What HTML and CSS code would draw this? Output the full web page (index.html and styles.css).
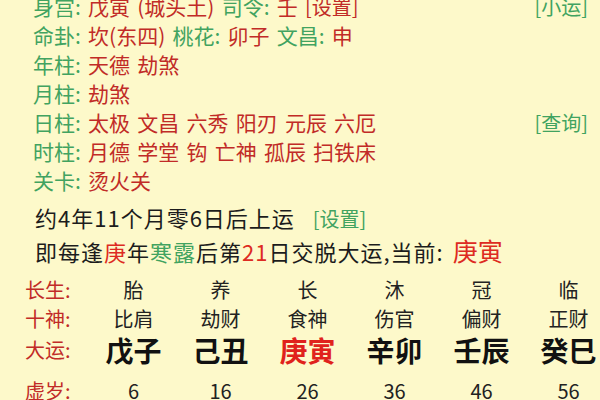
FILE: index.html
```html
<!DOCTYPE html>
<html lang="zh-CN">
<head>
<meta charset="utf-8">
<link rel="stylesheet" href="styles.css">
</head>
<body>
<div class="page">
  <div class="info">
    <div class="row">
      <div><span class="g">身宫:</span> <span class="r">戊寅 (城头土)</span> <span class="g">司令:</span> <span class="r">壬</span> <span class="r link">[设置]</span></div>
      <span class="g link">[小运]</span>
    </div>
    <div class="row">
      <div><span class="g">命卦:</span> <span class="r">坎(东四)</span> <span class="g">桃花:</span> <span class="r">卯子</span> <span class="g">文昌:</span> <span class="r">申</span></div>
    </div>
    <div class="row"><div><span class="g">年柱:</span> <span class="r">天德 劫煞</span></div></div>
    <div class="row"><div><span class="g">月柱:</span> <span class="r">劫煞</span></div></div>
    <div class="row">
      <div><span class="g">日柱:</span> <span class="r">太极 文昌 六秀 阳刃 元辰 六厄</span></div>
      <span class="g link">[查询]</span>
    </div>
    <div class="row"><div><span class="g">时柱:</span> <span class="r">月德 学堂 钩 亡神 孤辰 扫铁床</span></div></div>
    <div class="row"><div><span class="g">关卡:</span> <span class="r">烫火关</span></div></div>
  </div>
  <div class="sum">
    <div class="line">约4年11个月零6日后上运 <span class="g small">[设置]</span></div>
    <div class="line">即每逢<span class="hr">庚</span>年<span class="g">寒露</span>后第<span class="hr">21</span>日交脱大运,当前: <span class="hr big">庚寅</span></div>
  </div>
  <div class="table">
    <div class="lab">长生:</div>
    <div class="c">胎</div><div class="c">养</div><div class="c">长</div><div class="c">沐</div><div class="c">冠</div><div class="c">临</div>
    <div class="lab">十神:</div>
    <div class="c">比肩</div><div class="c">劫财</div><div class="c">食神</div><div class="c">伤官</div><div class="c">偏财</div><div class="c">正财</div>
    <div class="lab dy">大运:</div>
    <div class="c gz">戊子</div><div class="c gz">己丑</div><div class="c gz cur">庚寅</div><div class="c gz">辛卯</div><div class="c gz">壬辰</div><div class="c gz">癸巳</div>
    <div class="lab age">虚岁:</div>
    <div class="c age">6</div><div class="c age">16</div><div class="c age">26</div><div class="c age">36</div><div class="c age">46</div><div class="c age">56</div>
  </div>
</div>
</body>
</html>
```
FILE: styles.css
```css
html, body {
  margin: 0;
  padding: 0;
  background: #fdf9ca;
  overflow: hidden;
}
body {
  width: 600px;
  height: 400px;
  font-family: "Noto Sans CJK SC", "Noto Sans", sans-serif;
  color: #1c1c1c;
}
.page {
  display: flex;
  flex-direction: column;
}
.info {
  margin-top: -8px;
  padding: 0 12px 0 33px;
  font-size: 21px;
  word-spacing: 2.5px;
}
.row {
  height: 29px;
  line-height: 29px;
  display: flex;
  justify-content: space-between;
  white-space: nowrap;
}
.g { color: #41a360; }
.r { color: #c12b27; }
.link { font-size: 20px; word-spacing: 0; }
.sum {
  padding: 6px 0 0 35px;
  font-size: 22px;
  letter-spacing: 1px;
}
.line {
  height: 33px;
  line-height: 33px;
  white-space: nowrap;
}
.small { font-size: 20px; margin-left: 12px; letter-spacing: 0; }
.hr { color: #dd2b22; }
.big { font-size: 25px; letter-spacing: 0; margin-left: 3px; }
.table {
  margin-top: 8px;
  display: grid;
  grid-template-columns: 90px repeat(6, 87px);
  grid-template-rows: 29px 29px 34px 38px;
  align-items: center;
  font-size: 20px;
  line-height: 1.2;
}
.lab {
  color: #c12b27;
  padding-left: 25px;
  white-space: nowrap;
}
.c {
  text-align: center;
  white-space: nowrap;
  color: #222;
}
.gz {
  font-size: 28px;
  font-weight: 700;
  line-height: 1;
  color: #111;
}
.gz.cur { color: #e0221c; }
.age { padding-top: 9px; }
```
